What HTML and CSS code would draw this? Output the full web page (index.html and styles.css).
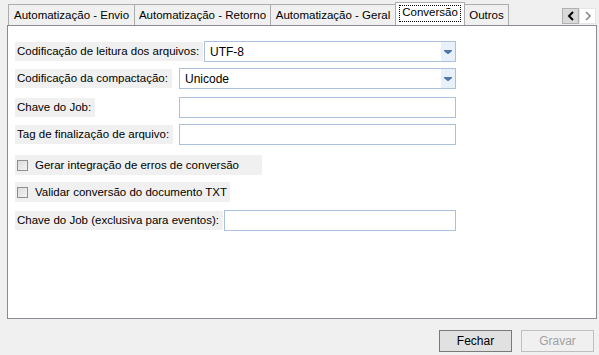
FILE: index.html
```html
<!DOCTYPE html>
<html lang="pt-BR">
<head>
  <meta charset="UTF-8">
  <title>Conversão</title>
  <link rel="stylesheet" href="styles.css">
</head>
<body>
  <div class="window">
    <div class="tab-strip">
      <div class="tab tab-envio">Automatização - Envio</div>
      <div class="tab tab-retorno">Automatização - Retorno</div>
      <div class="tab tab-geral">Automatização - Geral</div>
      <div class="tab tab-active"><span class="focus">Conversão</span></div>
      <div class="tab tab-outros">Outros</div>
      <div class="tab-scroll">
        <div class="scroll-btn scroll-btn-on">
          <svg width="8" height="10" viewBox="0 0 8 10"><path d="M6 1 L2 5 L6 9" fill="none" stroke="#000" stroke-width="2"/></svg>
        </div>
        <div class="scroll-btn">
          <svg width="8" height="10" viewBox="0 0 8 10"><path d="M2 1 L6 5 L2 9" fill="none" stroke="#888" stroke-width="1.6"/></svg>
        </div>
      </div>
    </div>

    <div class="panel">
      <div class="row row-enc">
        <span class="label">Codificação de leitura dos arquivos:</span>
        <div class="combo">
          <span class="combo-text">UTF-8</span>
          <span class="combo-arrow"><svg width="8" height="4" viewBox="0 0 8 4"><path d="M0 0 H8 V1 L4.5 4 H3.5 L0 1 Z" fill="#4e77ad"/></svg></span>
        </div>
      </div>

      <div class="row row-zip">
        <span class="label">Codificação da compactação:</span>
        <div class="combo">
          <span class="combo-text">Unicode</span>
          <span class="combo-arrow"><svg width="8" height="4" viewBox="0 0 8 4"><path d="M0 0 H8 V1 L4.5 4 H3.5 L0 1 Z" fill="#4e77ad"/></svg></span>
        </div>
      </div>

      <div class="row row-job">
        <span class="label">Chave do Job:</span>
        <div class="input"></div>
      </div>

      <div class="row row-tag">
        <span class="label">Tag de finalização de arquivo:</span>
        <div class="input"></div>
      </div>

      <div class="check check-erros">
        <span class="box"></span>
        <span>Gerar integração de erros de conversão</span>
      </div>

      <div class="check check-txt">
        <span class="box"></span>
        <span>Validar conversão do documento TXT</span>
      </div>

      <div class="row row-event">
        <span class="label">Chave do Job (exclusiva para eventos):</span>
        <div class="input"></div>
      </div>
    </div>

    <div class="buttons">
      <button class="btn btn-default">Fechar</button>
      <button class="btn btn-disabled" disabled>Gravar</button>
    </div>
  </div>
</body>
</html>
```

FILE: styles.css
```css
body {
  margin: 0;
  padding: 0;
  background-color: #f0f0f0;
  font-family: "Liberation Sans", Arial, sans-serif;
  font-size: 11.5px;
  color: #000000;
  overflow: hidden;
}

.window {
  width: 599px;
  height: 355px;
  display: flex;
  flex-direction: column;
}

/* abas */
.tab-strip {
  display: flex;
  align-items: flex-end;
  height: 25px;
  padding-left: 8px;
  box-sizing: border-box;
  white-space: nowrap;
}

.tab {
  height: 21px;
  box-sizing: border-box;
  padding-top: 4px;
  border: 1px solid #adadad;
  border-bottom: none;
  border-left: none;
  background-color: #f0f0f0;
  text-align: center;
}

.tab-envio { width: 127px; border-left: 1px solid #adadad; }
.tab-retorno { width: 136px; }
.tab-geral { width: 125px; }
.tab-outros { width: 44px; }

.tab-active {
  width: 70px;
  height: 24px;
  margin-bottom: -1px;
  margin-left: -1px;
  padding-top: 3px;
  background-color: #ffffff;
  border-left: 1px solid #adadad;
}

.focus {
  display: inline-block;
  padding: 0 2px 3px 2px;
  border: 1px dotted #000000;
  margin-top: -1px;
}

.tab-scroll {
  display: flex;
  margin-left: auto;
  margin-right: 3px;
  margin-bottom: 1px;
}

.scroll-btn {
  width: 17px;
  height: 16px;
  box-sizing: border-box;
  display: flex;
  align-items: center;
  justify-content: center;
  background-color: #ffffff;
  border: 1px solid #e6e6e6;
}

.scroll-btn-on {
  background-color: #d9d9d9;
  border-color: #b0b0b0;
}

/* painel */
.panel {
  margin-left: 7px;
  width: 590px;
  height: 294px;
  box-sizing: border-box;
  background-color: #ffffff;
  border: 1px solid #898c95;
  padding: 15px 7px 0 7px;
}

.row {
  display: grid;
  align-items: center;
  margin-bottom: 6px;
}

.row-enc { grid-template-columns: 189px 252px; }
.row-zip { grid-template-columns: 164px 277px; margin-top: 1px; }
.row-job { grid-template-columns: 164px 277px; margin-top: 8px; }
.row-tag { grid-template-columns: 164px 277px; margin-top: 1px; }
.row-event { grid-template-columns: 209px 232px; margin-top: 8px; }

.label {
  justify-self: start;
  white-space: nowrap;
  background-color: #f0f0f0;
  padding: 3px 4px 3px 2px;
  line-height: 13px;
}

.combo,
.input {
  height: 21px;
  box-sizing: border-box;
  border: 1px solid #abc0dc;
  background-color: #ffffff;
}

.combo {
  display: flex;
  align-items: center;
}

.combo-text {
  flex: 1;
  padding-left: 5px;
  font-size: 12px;
}

.combo-arrow {
  width: 14px;
  height: 19px;
  display: flex;
  align-items: center;
  justify-content: center;
  background-color: #e8f0fa;
}

.check {
  display: flex;
  align-items: center;
  box-sizing: border-box;
  white-space: nowrap;
  background-color: #f0f0f0;
  height: 20px;
  padding-left: 2px;
  margin-top: 7px;
}

.check-erros {
  width: 247px;
  margin-top: 10px;
}

.check-txt {
  width: 215px;
}

.box {
  width: 11px;
  height: 11px;
  box-sizing: border-box;
  border: 1px solid #8f8f8f;
  background: linear-gradient(135deg, #dcdcdc, #f4f4f4);
  margin-right: 7px;
}

/* botões */
.buttons {
  display: flex;
  justify-content: flex-end;
  gap: 9px;
  padding: 11px 5px 0 0;
}

.btn {
  width: 73px;
  height: 22px;
  font-family: "Liberation Sans", Arial, sans-serif;
  font-size: 12px;
  padding: 0;
}

.btn-default {
  background-color: #e1e1e1;
  border: 1px solid #7a7a7a;
  color: #000000;
}

.btn-disabled {
  background-color: #f0f0f0;
  border: 1px solid #bfbfbf;
  color: #a0a0a0;
}
```
